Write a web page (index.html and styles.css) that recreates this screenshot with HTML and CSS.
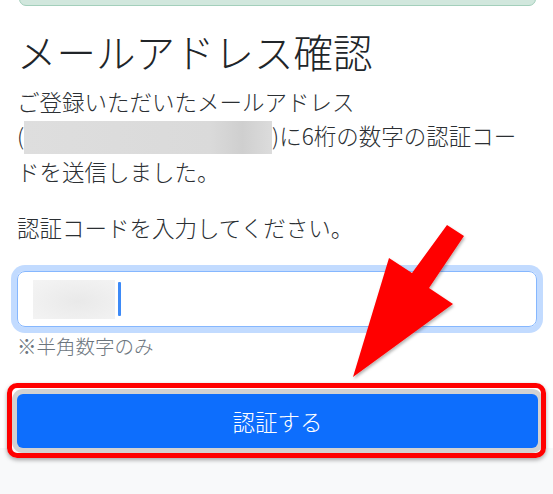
FILE: index.html
```html
<!DOCTYPE html>
<html lang="ja">
<head>
  <meta charset="UTF-8" />
  <title>メールアドレス確認</title>
  <link rel="stylesheet" href="styles.css">
</head>
<body>

<div class="card">
  <!-- Success alert (only its bottom edge is in view) -->
  <div class="alert-success"></div>

  <h1 class="title">メールアドレス確認</h1>

  <p class="lead-text">
    <span>ご登録いただいたメールアドレス</span><span class="nowrap">(<span class="masked"></span>)</span><span>に6桁の数字の認証コー</span><span>ドを送信しました。</span>
  </p>

  <p class="prompt">認証コードを入力してください。</p>

  <div class="code-input">
    <span class="masked-code"></span>
    <span class="caret"></span>
  </div>
  <div class="hint">※半角数字のみ</div>

  <button class="submit-button">認証する</button>
</div>

<!-- Annotation arrow -->
<svg class="arrow" width="553" height="494" viewBox="0 0 553 494">
  <defs>
    <filter id="shadow" x="-20%" y="-20%" width="140%" height="140%">
      <feDropShadow dx="1" dy="2" stdDeviation="1.5" flood-color="#000" flood-opacity="0.3" />
    </filter>
  </defs>
  <polygon points="447,225 464,236 429,288 453,304 353,377 389,258 412,273" fill="#ff0000" filter="url(#shadow)" />
</svg>

</body>
</html>
```

FILE: styles.css
```css
body {
  margin: 0;
  padding: 0;
  height: 494px;
  overflow: hidden;
  background: #f8f9fa;
  color: #212529;
  font-family: "Noto Sans CJK JP", "Noto Sans", sans-serif;
}

.card {
  background: #fff;
  padding: 0 16px 0 17px;
}

.alert-success {
  height: 40px;
  margin: -36px 1px 0 2px;
  background: #d1e7dd;
  border: 1px solid #a3cfbb;
  border-radius: 7px;
}

.title {
  margin: 21px 0 0;
  font-size: 39.5px;
  font-weight: 300;
  line-height: 47px;
  color: #212529;
}

.lead-text,
.prompt {
  font-size: 22.5px;
  line-height: 34px;
  font-weight: 300;
  color: #2b2f33;
}

.lead-text {
  margin: 10px 0 0;
}

.prompt {
  margin: 22px 0 0;
}

.nowrap {
  white-space: nowrap;
}

.masked {
  display: inline-block;
  width: 248px;
  height: 33px;
  vertical-align: -9px;
  background: linear-gradient(90deg, #dedede 0%, #dadada 75%, #cfcfcf 88%, #dcdcdc 100%);
}

/* Focused code input */
.code-input {
  display: flex;
  align-items: center;
  gap: 3px;
  height: 54px;
  margin-top: 27px;
  padding: 0 15px;
  border: 1px solid #86b7fe;
  border-radius: 8px;
  box-shadow: 0 0 0 6px #c2dbff;
}

.masked-code {
  width: 82px;
  height: 39px;
  background: radial-gradient(ellipse at 55% 55%, #e9e9e9 0%, #f1f1f1 70%, #f4f4f4 100%);
}

.caret {
  width: 3px;
  height: 34px;
  border-radius: 1px;
  background: #3d8af7;
}

.hint {
  margin-top: 4px;
  font-size: 19.5px;
  font-weight: 300;
  line-height: 29px;
  color: #6c757d;
}

/* Submit button with red highlight frame */
.submit-button {
  position: relative;
  display: block;
  width: 521px;
  height: 54px;
  margin: 34px 0 0;
  padding: 0;
  border: none;
  border-radius: 6px;
  background: #0d6efd;
  color: #fff;
  font-family: inherit;
  font-size: 22.5px;
  font-weight: 300;
  box-shadow: 0 0 0 5px #d2d2d2;
}

.submit-button::after {
  content: "";
  position: absolute;
  top: -11px;
  right: -8px;
  bottom: -10px;
  left: -10px;
  border: 5px solid #ff0000;
  border-radius: 10px;
  box-shadow: 0 2px 4px rgba(0, 0, 0, 0.35);
  pointer-events: none;
}

.arrow {
  position: absolute;
  top: 0;
  left: 0;
  pointer-events: none;
}
```
